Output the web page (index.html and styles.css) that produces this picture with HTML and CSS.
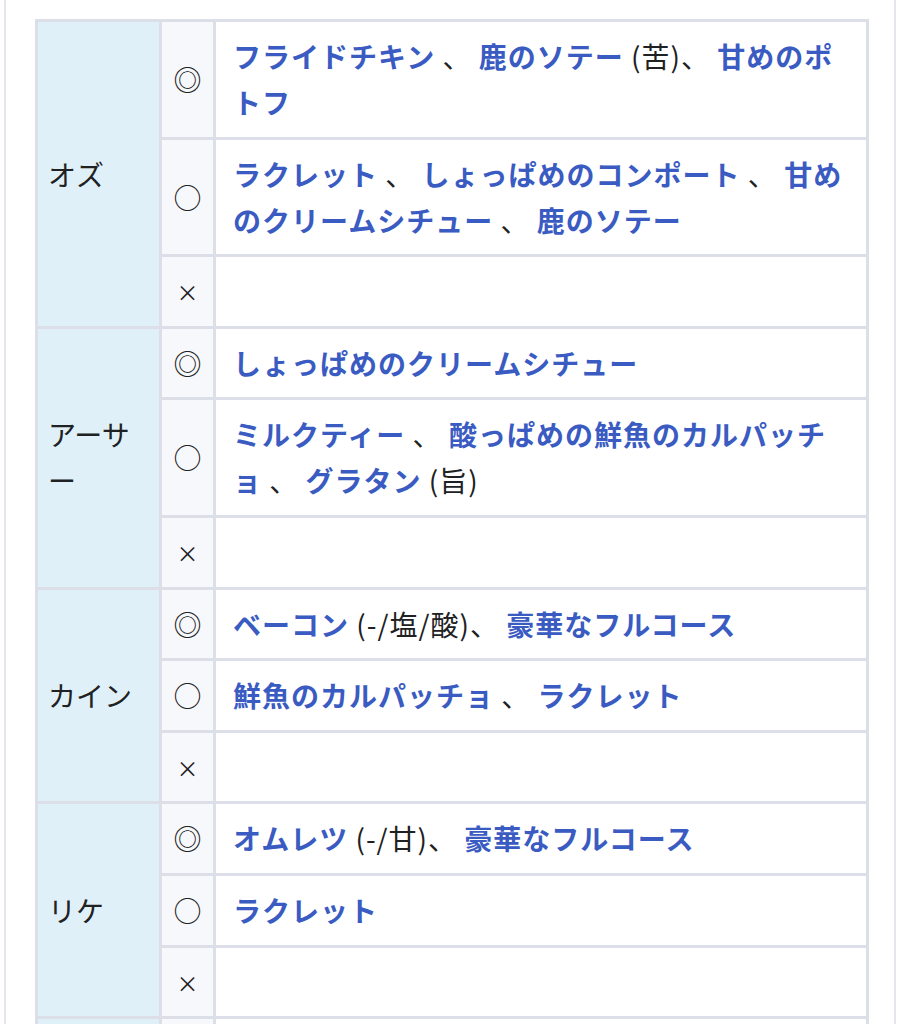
FILE: index.html
```html
<!DOCTYPE html>
<html lang="ja">
<head>
<meta charset="utf-8">
<link rel="stylesheet" href="styles.css">
</head>
<body>
<div class="frame">
<table class="likes">
<colgroup><col class="c-name"><col class="c-mark"><col class="c-food"></colgroup>
<tbody>
<tr><th rowspan="3">オズ</th><td class="mark">◎</td><td class="food"><a>フライドチキン</a> 、 <a>鹿のソテー</a> (苦)、 <a>甘めのポトフ</a></td></tr>
<tr><td class="mark">○</td><td class="food"><a>ラクレット</a> 、 <a>しょっぱめのコンポート</a> 、 <a>甘めのクリームシチュー</a> 、 <a>鹿のソテー</a></td></tr>
<tr><td class="mark x">×</td><td class="food"></td></tr>

<tr><th rowspan="3">アーサー</th><td class="mark">◎</td><td class="food"><a>しょっぱめのクリームシチュー</a></td></tr>
<tr><td class="mark">○</td><td class="food"><a>ミルクティー</a> 、 <a>酸っぱめの鮮魚のカルパッチョ</a> 、 <a>グラタン</a> (旨)</td></tr>
<tr><td class="mark x">×</td><td class="food"></td></tr>

<tr><th rowspan="3">カイン</th><td class="mark">◎</td><td class="food"><a>ベーコン</a> (-/塩/酸)、 <a>豪華なフルコース</a></td></tr>
<tr><td class="mark">○</td><td class="food"><a>鮮魚のカルパッチョ</a> 、 <a>ラクレット</a></td></tr>
<tr><td class="mark x">×</td><td class="food"></td></tr>

<tr><th rowspan="3">リケ</th><td class="mark">◎</td><td class="food"><a>オムレツ</a> (-/甘)、 <a>豪華なフルコース</a></td></tr>
<tr><td class="mark">○</td><td class="food"><a>ラクレット</a></td></tr>
<tr><td class="mark x">×</td><td class="food"></td></tr>

<tr><th></th><td class="mark"></td><td class="food"></td></tr>
</tbody>
</table>
</div>
</body>
</html>
```

FILE: styles.css
```css
html, body {
  margin: 0;
  padding: 0;
  background: #ffffff;
}
body {
  font-family: "Noto Sans CJK JP", "Noto Sans", sans-serif;
  font-size: 28px;
  color: #202122;
  overflow: hidden;
  height: 1024px;
}
.frame {
  margin-left: 4px;
  width: 892px;
  min-height: 1100px;
  border-left: 2px solid #e3e6ec;
  border-right: 2px solid #e3e6ec;
  padding: 19px 0 0 29px;
  box-sizing: border-box;
}
.likes {
  border-collapse: collapse;
  table-layout: fixed;
  width: 834px;
  line-height: 46px;
}
.c-name { width: 124px; }
.c-mark { width: 54px; }
.likes th, .likes td {
  border: 3px solid #dcdfe8;
  padding: 11px 16px 11.6px;
  vertical-align: middle;
}
.likes th {
  background: #e0f0f8;
  font-weight: 400;
  text-align: left;
  padding-left: 10px;
  padding-right: 8px;
}
.likes td.mark {
  background: #f7f8fb;
  text-align: center;
  padding-left: 0;
  padding-right: 0;
}
.likes td.x {
  font-size: 22px;
}
.likes td.food {
  background: #ffffff;
  padding-left: 17px;
  padding-right: 18px;
  letter-spacing: 1px;
}
.likes a {
  color: #3a5bc2;
  font-weight: 700;
  text-decoration: none;
}
```
